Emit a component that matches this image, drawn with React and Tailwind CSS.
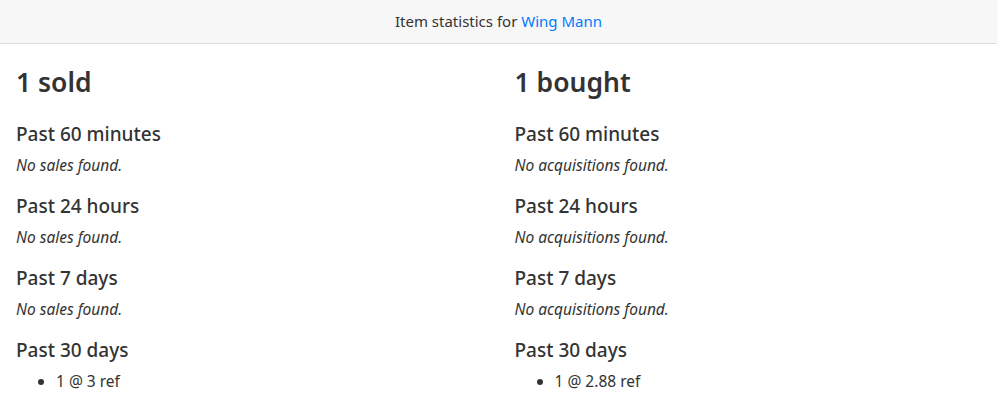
const PERIODS = ['Past 60 minutes', 'Past 24 hours', 'Past 7 days', 'Past 30 days'];

const COLUMNS = [
  { title: '1 sold', empty: 'No sales found.', price: '1 @ 3 ref' },
  { title: '1 bought', empty: 'No acquisitions found.', price: '1 @ 2.88 ref' },
];

function StatColumn({ title, empty, price }) {
  return (
    <div className="px-4">
      <h2 className="text-[26.5px] leading-[34px] font-semibold text-[#333]">{title}</h2>
      <div className="mt-[23px] flex flex-col gap-[18px]">
        {PERIODS.map((p, i) => (
          <div key={p}>
            <h4 className="text-[19px] leading-[24px] font-medium text-[#333]">{p}</h4>
            {i < PERIODS.length - 1 ? (
              <p className="mt-2 text-[15.5px] leading-[22px] italic text-[#333]">{empty}</p>
            ) : (
              <ul className="mt-2 list-disc pl-10 text-[15.5px] leading-[22px] text-[#333]">
                <li>{price}</li>
              </ul>
            )}
          </div>
        ))}
      </div>
    </div>
  );
}

export default function App() {
  return (
    <div className="min-h-screen bg-white" style={{ fontFamily: '"Noto Sans", "Open Sans", sans-serif' }}>
      <div className="h-[44px] flex items-center justify-center bg-[#f7f7f7] border-b border-[#dcdcdc] text-[15px] text-[#333]">
        Item statistics for&nbsp;<a href="#" className="text-[#007bff]">Wing Mann</a>
      </div>
      <div className="grid grid-cols-2 pt-[21px]">
        {COLUMNS.map(c => <StatColumn key={c.title} {...c} />)}
      </div>
    </div>
  );
}
